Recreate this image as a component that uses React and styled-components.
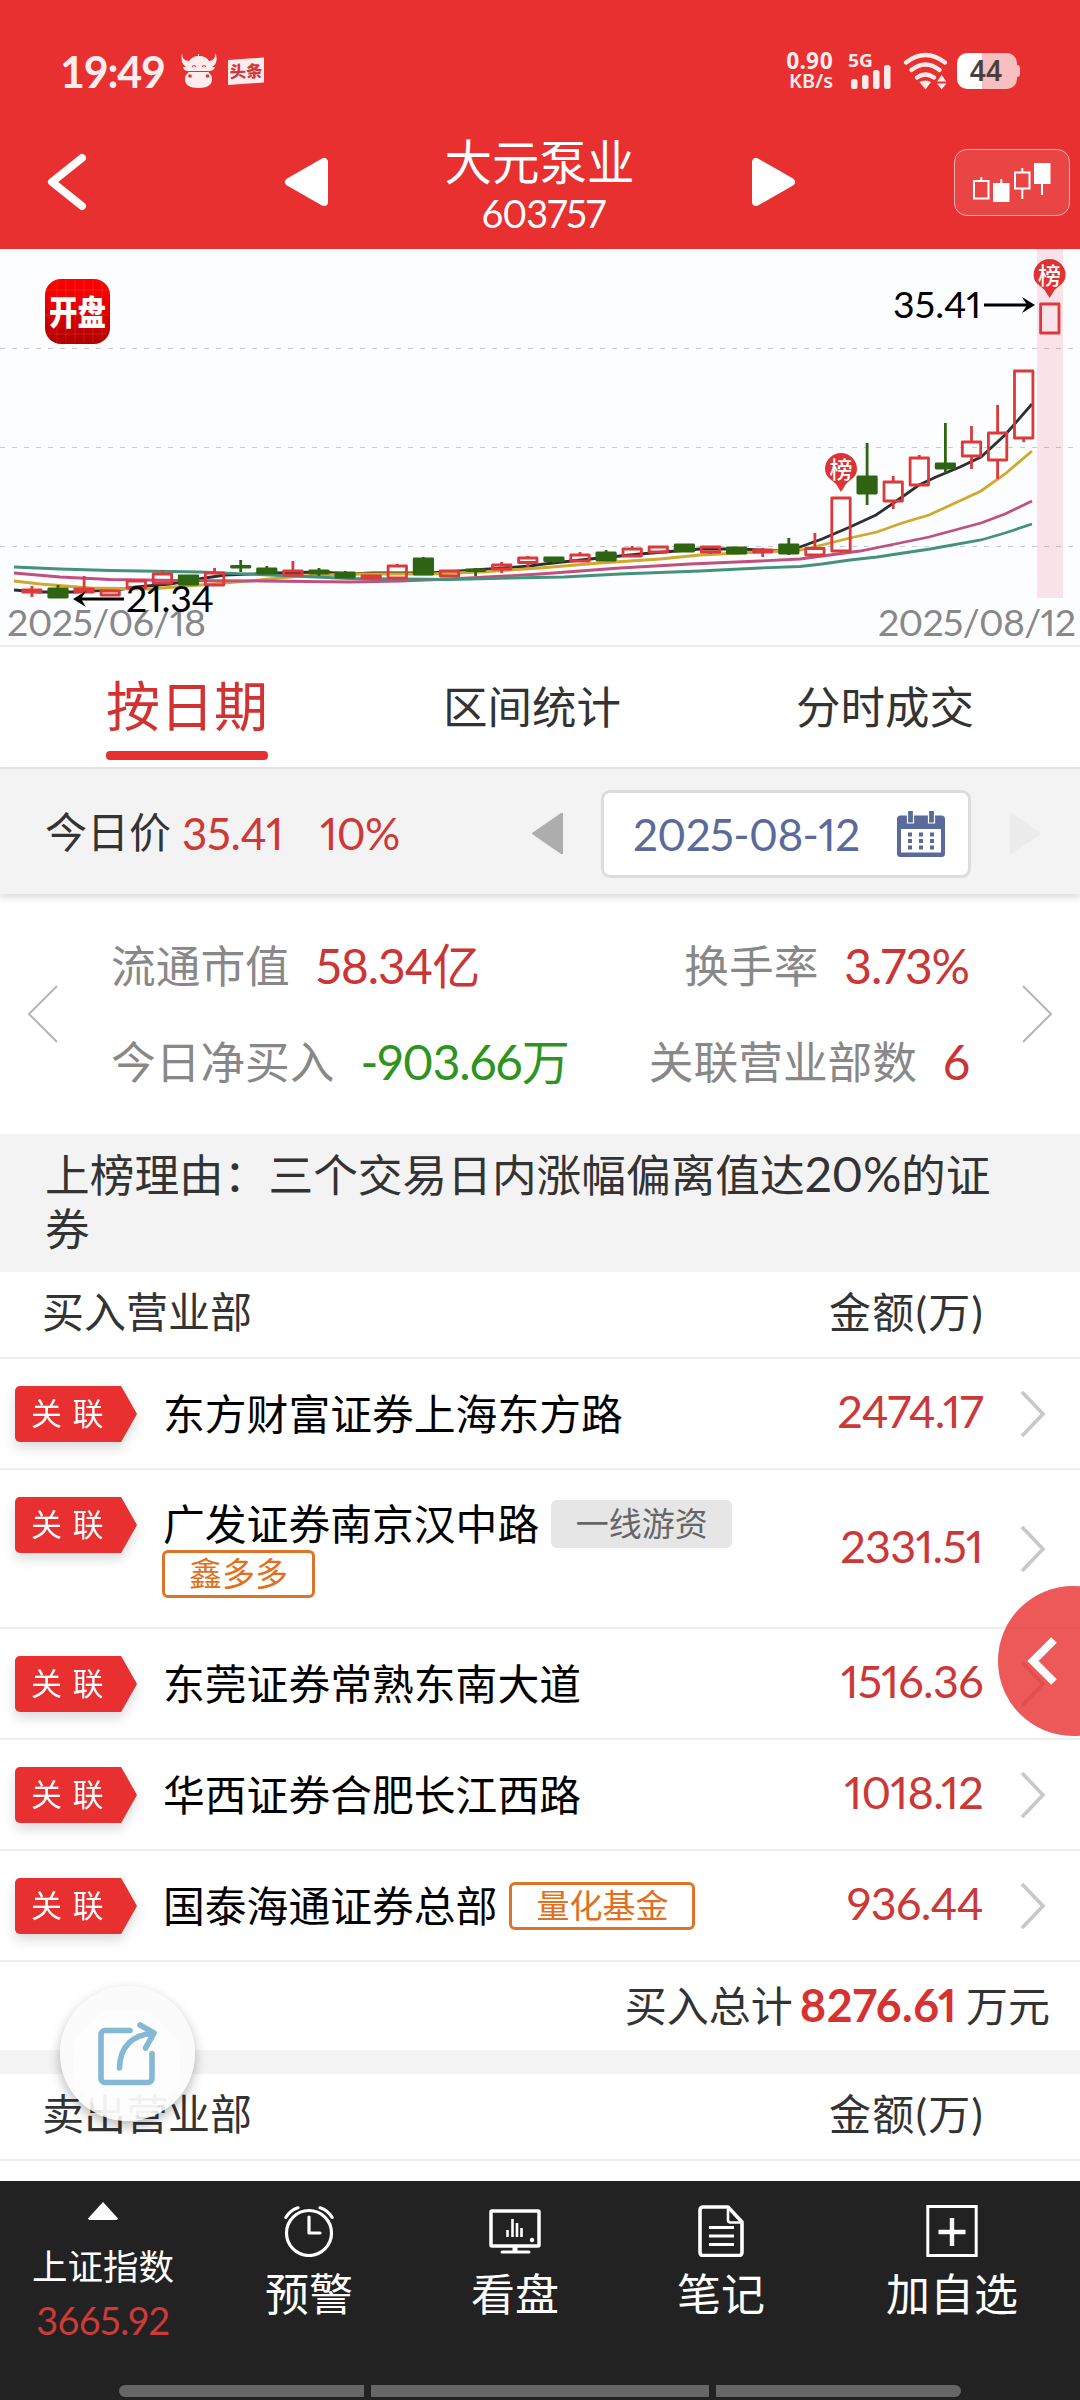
import React from 'react'
import styled, { createGlobalStyle } from 'styled-components'

const RED = '#e83030'

const candles = [
  // kind, top, bottom, high, low
  ['r', 590, 592, 586, 597],
  ['g', 588, 598, 585, 598],
  ['r', 589, 592, 576, 593],
  ['r', 591, 595, 590, 596],
  ['r', 581, 588, 580, 589],
  ['r', 574, 583, 570, 583],
  ['g', 575, 585, 575, 585],
  ['r', 573, 585, 568, 585],
  ['g', 565.5, 567.5, 560, 572],
  ['g', 568, 574, 566, 574],
  ['r', 571, 575, 561, 577],
  ['g', 570, 574, 568, 576],
  ['g', 572, 578, 571, 578],
  ['r', 576, 578, 575, 580],
  ['r', 566, 578, 564, 579],
  ['g', 558, 575, 557, 575],
  ['r', 571, 576, 570, 577],
  ['g', 569, 571.5, 568, 576],
  ['r', 565, 569, 562, 573],
  ['r', 558, 562.5, 556, 567],
  ['g', 557, 561.5, 557, 563],
  ['r', 555, 561, 552, 561],
  ['g', 552, 561, 550, 561],
  ['r', 549, 556, 546, 556],
  ['r', 547, 552, 546, 552],
  ['g', 544, 552, 544, 552],
  ['r', 547, 552, 546, 554],
  ['g', 547, 554, 547, 554],
  ['r', 550, 552, 548, 557],
  ['g', 544, 554, 538, 555],
  ['r', 548.5, 555, 533, 555],
  ['r', 498, 551, 497, 551],
  ['g', 476, 494, 443, 505],
  ['r', 482, 501, 476, 509],
  ['r', 458, 485, 455, 485],
  ['g', 463, 469, 423, 473],
  ['r', 442, 456, 426, 469],
  ['r', 433, 460, 405, 479],
  ['r', 371, 438, 370, 442],
  ['r', 304, 333, 304, 333],
]

const averages = [
  {
    color: '#2f2f33',
    points: '14,590 40,592 75,592 90,591 116,590 136,587 170,584 205,578 225,575 277,573 320,572 350,574 372,573 430,573 475,570 530,566 544,564 590,559 640,554 700,549 740,549 780,551 800,547 822,539 850,527 876,515 895,502 919,485 936,477 960,467 981,457 1005,435 1032,404',
  },
  {
    color: '#cfa92c',
    points: '14,581 40,584 90,588 150,589 200,585 260,580 300,576 350,574 430,574 480,572 540,568 600,563 660,559 700,555 760,552 800,550 822,545 850,538 877,532 902,523 929,515 953,504 981,491 1005,474 1032,451',
  },
  {
    color: '#c0507f',
    points: '14,573 60,577 110,579.5 180,580.5 260,581 350,582 400,581 450,579 540,574 620,568 690,564 760,561 800,559 860,551 900,543 929,537 981,523 1005,514 1032,501',
  },
  {
    color: '#45917a',
    points: '14,567 60,569 110,570.5 200,572 270,575 350,578.5 450,579.5 510,578 564,577 620,574 700,571 760,568 800,566.5 822,564 850,560 877,557 930,549 981,540 1005,533 1032,524',
  },
]

const buyers = [
  { name: '东方财富证券上海东方路', amount: '2474.17' },
  { name: '广发证券南京汉中路', amount: '2331.51', tags: [{ text: '一线游资' }, { text: '鑫多多', hot: true }] },
  { name: '东莞证券常熟东南大道', amount: '1516.36' },
  { name: '华西证券合肥长江西路', amount: '1018.12' },
  { name: '国泰海通证券总部', amount: '936.44', tags: [{ text: '量化基金', hot: true }] },
]

const Pin = ({ x, y }) => (
  <g>
    <path d={`M${x - 16} ${y}a16 16 0 1 1 32 0c0 8-7 11-11 15l-5 8-5-8c-4-4-11-7-11-15z`} fill="#e03232" />
    <text x={x} y={y + 8.5} fontSize="23" fontWeight="500" fill="#fff" textAnchor="middle">榜</text>
  </g>
)

const Chart = () => (
  <ChartBox>
    <svg width="1080" height="396" viewBox="0 249 1080 396">
      <defs>
        <linearGradient id="logo" x1="0" y1="0" x2="0" y2="1">
          <stop offset="0" stopColor="#ff0000" />
          <stop offset="0.25" stopColor="#f40000" />
          <stop offset="1" stopColor="#b00000" />
        </linearGradient>
      </defs>
      {[348.5, 447.5, 546.5].map((y) => (
        <line key={y} x1="0" x2="1075" y1={y} y2={y} stroke="#c9cbd2" strokeDasharray="5 7" />
      ))}
      <rect x="1037" y="249" width="26" height="349" fill="#e8304f" fillOpacity="0.13" />
      {averages.map((line) => (
        <polyline key={line.color} points={line.points} fill="none" stroke={line.color} strokeWidth="2.8" />
      ))}
      {candles.map(([kind, top, bottom, high, low], i) => {
        const x = 31.9 + i * 26.1
        const color = kind === 'r' ? '#dc3a3a' : '#2f6512'
        return (
          <g key={i} stroke={color} strokeWidth="2.8" strokeLinejoin="round">
            <line x1={x} x2={x} y1={high} y2={top} />
            <line x1={x} x2={x} y1={bottom} y2={low} />
            <rect
              x={x - 9.2}
              y={kind === 'r' ? top : top + 1}
              width="18.4"
              height={Math.max(kind === 'r' ? bottom - top : bottom - top - 2, 0.5)}
              fill={kind === 'r' ? 'none' : color}
            />
          </g>
        )
      })}
      <Pin x={1049.6} y={275} />
      <Pin x={841} y={469} />
      <rect x="45" y="279" width="65" height="65" rx="16" fill="url(#logo)" />
      <path d="M57 280v63M66 280v63M75 280v63M84 280v63M93 280v63M102 280v63M46 290h63M46 315h63M46 334h63" stroke="#fff" strokeOpacity="0.1" />
      <text x="77.5" y="324.5" fontSize="34" fontWeight="900" fill="#fff" textAnchor="middle" textLength="57" lengthAdjust="spacingAndGlyphs">开盘</text>
      <Label x="7" y="636" fill="#888" textLength="199">2025/06/18</Label>
      <Label x="878" y="636" fill="#888" textLength="198">2025/08/12</Label>
      <Label x="126" y="612" fill="#000" textLength="88">21.34</Label>
      <Label x="893" y="318" fill="#000" textLength="88">35.41</Label>
      <g fill="none" stroke="#000" strokeWidth="3">
        <path d="M124 599H77M984 305h48" />
      </g>
      <path d="M73 599l13-8-5 8 5 8z M1035 305l-13-8 5 8-5 8z" fill="#000" />
    </svg>
  </ChartBox>
)

const Clock = () => (
  <svg width="52" height="52" viewBox="0 0 52 52" fill="none" stroke="#fff" strokeLinecap="round">
    <circle cx="26" cy="28" r="22.5" strokeWidth="3.2" />
    <path d="M26 12v16h11" strokeWidth="3.2" strokeLinejoin="round" />
    <path d="M2.8 12.5Q7.5 5 15 2.8M49.2 12.5Q44.5 5 37 2.8" strokeWidth="3.2" />
  </svg>
)

const Monitor = () => (
  <svg width="52" height="52" viewBox="0 0 52 52" fill="none" stroke="#fff">
    <rect x="2" y="6" width="48" height="35" rx="1" strokeWidth="3.5" />
    <path d="M18.5 25v7M23.5 14v18M28 18v14M32.5 23v9" strokeWidth="2.6" />
    <circle cx="43" cy="35" r="2.2" fill="#fff" stroke="none" />
    <path d="M26 42v4" strokeWidth="5" />
    <path d="M13 47h27" strokeWidth="3" strokeLinecap="round" />
  </svg>
)

const Note = () => (
  <svg width="52" height="52" viewBox="0 0 52 52" fill="none" stroke="#fff" strokeLinejoin="round">
    <path d="M8 2h25l14 15v30.5a3 3 0 0 1-3 3H8a3 3 0 0 1-3-3V5a3 3 0 0 1 3-3z" strokeWidth="3.6" />
    <path d="M33 4v11a2.5 2.5 0 0 0 2.5 2.5H46" strokeWidth="2.6" />
    <path d="M14 22.5h25M14 31h25M14 39.5h25" strokeWidth="2.8" />
  </svg>
)

const AddBox = () => (
  <svg width="52" height="52" viewBox="0 0 52 52" fill="none" stroke="#fff">
    <rect x="1.8" y="1.5" width="48.4" height="49" strokeWidth="3" />
    <path d="M12.5 27h27M26 13v28" strokeWidth="4.4" />
  </svg>
)

const Chevron = () => (
  <svg width="30" height="48" viewBox="0 0 30 48" fill="none" stroke="#c8c8c8" strokeWidth="3.6">
    <path d="M4 2l21 22L4 46" />
  </svg>
)

const StatusIcons = () => (
  <>
    <Speed>
      <b>0.90</b>
      <span>KB/s</span>
    </Speed>
    <StatusSvg width="44" height="50" viewBox="850 46 44 50" fill="#ffeaea">
      <text x="850" y="67" fontSize="18" fontWeight="700" textLength="25" lengthAdjust="spacingAndGlyphs">5G</text>
      <rect x="853" y="79" width="6.5" height="10" rx="2.5" />
      <rect x="864" y="75" width="6.5" height="14" rx="2.5" />
      <rect x="875" y="70" width="6.5" height="19" rx="2.5" />
      <rect x="886" y="65" width="6.5" height="24" rx="2.5" />
    </StatusSvg>
    <Wifi width="46" height="38" viewBox="903 52 46 38" fill="none" stroke="#ffeaea" strokeWidth="4.2" strokeLinecap="round">
      <path d="M906 62.5Q925.5 47.5 945 62.5M911.5 70Q925.5 59 939.5 70M917 77.5Q925.5 71.5 934 77.5" />
      <path d="M919.5 82q6-3 11.5 0l-5.5 7.5z M937 81.5l4.7-6.5 4.7 6.5z M937 83.5h9.4l-4.7 6z" fill="#ffeaea" stroke="none" />
    </Wifi>
    <StatusSvg width="64" height="38" viewBox="957 52 64 38">
      <path d="M982.5 53H1007a10 10 0 0 1 10 10v2a3 3 0 0 1 3 3v6a3 3 0 0 1-3 3v2a10 10 0 0 1-10 10h-24.5z" fill="#f7bfbf" />
      <path d="M982.5 53H967a10 10 0 0 0-10 10v16a10 10 0 0 0 10 10h15.5z" fill="#fff" />
      <text x="986" y="81" fontSize="28" fontWeight="600" fill="#4a3f3f" textAnchor="middle">44</text>
    </StatusSvg>
  </>
)

const App = () => {
  return (
    <Page>
      <Global />
      <Header>
        <Status>
          <Time>19:49</Time>
          <svg width="36" height="36" viewBox="0 0 36 36" fill="#ffecec">
            <path d="M1 0Q1 8 8 8Q12 3 17 3V1h1v2q7 0 10 5Q34 8 34.5 0Q38 10 31 14h3q-1 4-6 4v2q3 2 3 6 0 9-13.5 9T4 26q0-4 3-6v-2q-4 0-5-4h3Q-1 10 1 0z" />
            <path d="M11 13.5q2-1.5 4 0M21 13.5q2-1.5 4 0M6 19q1-.5 2-.5h19q1 0 2 .5" fill="none" stroke={RED} strokeWidth="1.2" />
            <circle cx="9" cy="23" r="1.8" fill={RED} />
            <circle cx="26.5" cy="23" r="1.8" fill={RED} />
          </svg>
          <svg width="36" height="30" viewBox="0 0 36 30">
            <path d="M0 4l36-2.5v25L0 29z" fill="#ffecec" />
            <text x="18" y="21.5" fontSize="16.5" fontWeight="900" fill="#d03a3a" textAnchor="middle" transform="rotate(-2 18 15)">头条</text>
          </svg>
          <Spacer />
          <StatusIcons />
        </Status>
        <TitleBar>
          <svg width="42" height="60" viewBox="0 0 42 60" fill="none" stroke="#fff" strokeWidth="8" strokeLinecap="round" strokeLinejoin="round">
            <path d="M36 6L6 30l30 24" />
          </svg>
          <Switcher>
            <svg width="45" height="50" viewBox="0 0 45 50" fill="#fff" stroke="#fff" strokeWidth="8" strokeLinejoin="round">
              <path d="M40 5v40L5 25z" />
            </svg>
            <Stock>
              <h1>大元泵业</h1>
              <p>603757</p>
            </Stock>
            <svg width="45" height="50" viewBox="0 0 45 50" fill="#fff" stroke="#fff" strokeWidth="8" strokeLinejoin="round">
              <path d="M5 5v40l35-20z" />
            </svg>
          </Switcher>
          <KButton>
            <svg width="80" height="42" viewBox="973 160 80 42" stroke="#fff" strokeWidth="2" fill="none">
              <path d="M975 180h14.5v17.5H975zM982.3 176v4M1002.3 178v5M1016 171.5h14.5v16H1016zM1023.3 167v4M1023.3 188v10M1043 182v12" />
              <path d="M995 183h14.5v17H995zM1036 163h14.5v19H1036z" fill="#fff" />
            </svg>
          </KButton>
        </TitleBar>
      </Header>
      <Chart />
      <Tabs>
        <Tab $active>按日期</Tab>
        <Tab>区间统计</Tab>
        <Tab>分时成交</Tab>
      </Tabs>
      <PriceBar>
        <span>今日价</span>
        <Price>35.41</Price>
        <Rate>10%</Rate>
        <Spacer />
        <svg width="31" height="41" viewBox="0 0 31 41" fill="#adadad">
          <path d="M31 0v41h-2L0 21v-1L29 0z" />
        </svg>
        <DateBox>
          2025-08-12
          <svg width="48" height="46" viewBox="0 0 48 46">
            <rect x="0" y="4.5" width="48" height="41.5" rx="3.5" fill="#5a6a9c" />
            <rect x="4" y="18" width="40" height="23.500" fill="#fff" />
            <path d="M10.500 0v12h6V0M31.500 0v12h6V0" fill="#5a6a9c" stroke="#fff" strokeWidth="1.200" />
            <path d="M11 23.500h28M11 30h28M11 36.500h28" stroke="#5a6a9c" strokeWidth="4" strokeDasharray="4 7" />
          </svg>
        </DateBox>
        <svg width="31" height="41" viewBox="0 0 31 41" fill="#ececec">
          <path d="M0 0v41h2l29-20v-1L2 0z" />
        </svg>
      </PriceBar>
      <Summary>
        <svg width="30" height="58" viewBox="0 0 30 58" fill="none" stroke="#b5b5b5" strokeWidth="2">
          <path d="M29 1L1 29l28 28" />
        </svg>
        <Facts>
          <Fact>流通市值<Value>58.34亿</Value></Fact>
          <Fact>换手率<Value>3.73%</Value></Fact>
          <Fact>今日净买入<Value $down>-903.66万</Value></Fact>
          <Fact>关联营业部数<Value>6</Value></Fact>
        </Facts>
        <svg width="30" height="58" viewBox="0 0 30 58" fill="none" stroke="#b5b5b5" strokeWidth="2">
          <path d="M1 1l28 28L1 57" />
        </svg>
      </Summary>
      <Reason>上榜理由：三个交易日内涨幅偏离值达<i>20%</i>的证券</Reason>
      <ListHead>
        <span>买入营业部</span>
        <HeadAmount>金额(万)</HeadAmount>
      </ListHead>
      {buyers.map((item) => (
        <Row key={item.name}>
          <Flag><span>关联</span></Flag>
          <Name>
            {item.name}
            {item.tags && item.tags.map((tag) => (
              <Tag key={tag.text} $hot={tag.hot}>{tag.text}</Tag>
            ))}
          </Name>
          <Amount>{item.amount}</Amount>
          <Chevron />
        </Row>
      ))}
      <Total>买入总计<b>8276.61</b>万元</Total>
      <Gap />
      <ListHead>
        <span>卖出营业部</span>
        <HeadAmount>金额(万)</HeadAmount>
      </ListHead>
      <Spacer />
      <Nav>
        <NavIndex>
          <svg width="30" height="18" viewBox="0 0 30 18" fill="#fff">
            <path d="M15 0l15 16.5-1 1.5H1l-1-1.5z" />
          </svg>
          <span>上证指数</span>
          <em>3665.92</em>
        </NavIndex>
        <NavItem><Clock />预警</NavItem>
        <NavItem><Monitor />看盘</NavItem>
        <NavItem><Note />笔记</NavItem>
        <NavItem $wide><AddBox />加自选</NavItem>
        <Gesture>
          <i /><i /><i />
        </Gesture>
      </Nav>
      <SideButton>
        <svg width="32" height="48" viewBox="0 0 32 48" fill="none" stroke="#fff" strokeWidth="8">
          <path d="M28 3L7 24l21 21" />
        </svg>
      </SideButton>
      <ShareButton>
        <svg width="62" height="66" viewBox="97 2021 62 66" fill="none" stroke="#84b8d5" strokeWidth="5.6" strokeLinecap="round" strokeLinejoin="round">
          <path d="M130 2030.5h-25a4 4 0 0 0-4 4v44a4 4 0 0 0 4 4h43a4 4 0 0 0 4-4v-25" />
          <path d="M119.5 2068C120 2045 134 2035 153 2033M140 2025l14 8-8.5 15" />
        </svg>
      </ShareButton>
    </Page>
  );
}

const Global = createGlobalStyle`
  * {
    box-sizing: border-box;
  }
  body {
    margin: 0;
    background: #fff;
  }
  svg {
    display: block;
    flex: none;
  }
`;

const Page = styled.div`
  position: relative;
  display: flex;
  flex-direction: column;
  width: 1080px;
  height: 2400px;
  overflow: hidden;
  background: #fff;
  color: #333;
  font-family: Lato, "Noto Sans CJK SC", sans-serif;
  font-size: 42px;
  font-variant-numeric: proportional-nums;
  line-height: 1;
  white-space: nowrap;
`;

const Spacer = styled.div`
  flex: 1;
`;

const Header = styled.header`
  height: 249px;
  background: ${RED};
  color: #fff;
`;

const Status = styled.div`
  display: flex;
  align-items: center;
  height: 115px;
  padding: 27px 59px 0 60px;
  > svg + svg {
    margin-left: 11px;
  }
`;

const Time = styled.div`
  width: 121px;
  font-size: 43px;
  font-weight: 700;
  letter-spacing: -1.2px;
  font-variant-numeric: tabular-nums;
  color: #ffecec;
`;

const StatusSvg = styled.svg`
  font-family: "Noto Sans", sans-serif;
`;

const Speed = styled.div`
  display: flex;
  flex-direction: column;
  align-items: flex-end;
  margin-right: 15px;
  color: #ffecec;
  font-family: "Noto Sans", sans-serif;
  font-size: 20px;
  font-weight: 600;
  line-height: 20px;
  b {
    font-size: 22.5px;
    font-weight: 700;
    line-height: 20px;
  }
`;

const Wifi = styled.svg`
  margin-right: -3px;
`;

const TitleBar = styled.div`
  display: flex;
  align-items: center;
  justify-content: space-between;
  height: 134px;
  padding: 0 10px 0 46px;
`;

const Switcher = styled.div`
  display: flex;
  align-items: center;
  justify-content: space-between;
  width: 512px;
  margin-left: 37px;
`;

const Stock = styled.div`
  padding-top: 8px;
  text-align: center;
  h1 {
    margin: 0;
    font-size: 47.5px;
    font-weight: 400;
    line-height: 56px;
  }
  p {
    margin: 0 0 6px;
    padding: 3px 0 0 8px;
    font-size: 38px;
    line-height: 40px;
    letter-spacing: -1px;
  }
`;

const KButton = styled.button`
  display: flex;
  align-items: center;
  justify-content: center;
  width: 116px;
  height: 67px;
  padding: 0;
  border: 1.5px solid #f6b0b0;
  border-radius: 13px;
  background: rgba(255, 255, 255, 0.1);
`;

const ChartBox = styled.div`
  height: 396px;
  background: #fcfdff;
`;

const Label = styled.text`
  font-size: 37.5px;
`;

const Tabs = styled.div`
  display: flex;
  justify-content: space-between;
  height: 124px;
  padding: 0 106px;
  border-top: 2px solid #ececee;
  border-bottom: 2px solid #e8e8e8;
`;

const Tab = styled.div`
  height: 112px;
  font-size: ${(p) => (p.$active ? '54px' : '44.5px')};
  line-height: 119px;
  color: ${(p) => (p.$active ? '#d23232' : '#333')};
  &::after {
    content: '';
    display: ${(p) => (p.$active ? 'block' : 'none')};
    height: 9px;
    margin-top: -15px;
    border-radius: 4px;
    background: ${RED};
  }
`;

const PriceBar = styled.div`
  position: relative;
  display: flex;
  align-items: center;
  height: 125px;
  padding: 4px 39px 0 45px;
  background: #f3f3f3;
  box-shadow: 0 3px 8px rgba(0, 0, 0, 0.16);
  > span {
    margin-top: -3px;
  }
`;

const Price = styled.div`
  width: 138px;
  margin: -2px 0 0 11px;
  color: #d03838;
  font-size: 44px;
  letter-spacing: -0.4px;
`;

const Rate = styled.div`
  margin-top: -2px;
  color: #d03838;
  font-size: 44px;
  letter-spacing: -0.7px;
`;

const DateBox = styled.div`
  display: flex;
  align-items: center;
  justify-content: space-between;
  width: 370px;
  height: 88px;
  margin: 0 39px 0 38px;
  padding: 0 23px 0 29px;
  border: 3px solid #dcdcdc;
  border-radius: 9px;
  background: #fff;
  color: #5a6a9c;
  font-size: 44px;
  letter-spacing: -0.6px;
`;

const Summary = styled.div`
  display: flex;
  align-items: center;
  height: 240px;
  padding: 0 28px;
`;

const Facts = styled.div`
  flex: 1;
  display: grid;
  grid-template-columns: auto auto;
  justify-content: space-between;
  row-gap: 40px;
  padding: 0 53px 0 53px;
`;

const Fact = styled.div`
  display: flex;
  align-items: center;
  height: 56px;
  color: #888;
  font-size: 44.7px;
  &:nth-child(even) {
    justify-content: flex-end;
  }
`;

const Value = styled.span`
  margin-left: 26px;
  color: ${(p) => (p.$down ? '#2e9420' : '#cc3535')};
  font-size: 48px;
  letter-spacing: -1.1px;
`;

const Reason = styled.div`
  height: 138px;
  padding: 14px 60px 0 45px;
  background: #f3f3f3;
  font-size: 44.7px;
  line-height: 54px;
  white-space: normal;
  i {
    font-style: normal;
    font-size: 48px;
    line-height: 50px;
    letter-spacing: -0.3px;
  }
`;

const ListHead = styled.div`
  flex: none;
  display: flex;
  justify-content: space-between;
  height: 87px;
  padding: 0 96px 0 42px;
  border-bottom: 2px solid #ededed;
  line-height: 80px;
`;

const HeadAmount = styled.span`
  letter-spacing: 1.3px;
`;

const Row = styled.div`
  display: flex;
  align-items: center;
  min-height: 111px;
  padding: 29px 32px 29px 15px;
  border-bottom: 2px solid #eee;
`;

const Flag = styled.div`
  align-self: flex-start;
  width: 122px;
  height: 56px;
  margin-top: -2px;
  margin-bottom: -6px;
  filter: drop-shadow(0 6px 6px rgba(0, 0, 0, 0.14));
  span {
    display: block;
    height: 56px;
    padding-left: 16px;
    border-radius: 5px 0 0 5px;
    background: ${RED};
    clip-path: polygon(0 0, 87% 0, 100% 50%, 87% 100%, 0 100%);
    color: #fff;
    font-size: 31px;
    line-height: 55px;
    letter-spacing: 10.5px;
  }
`;

const Name = styled.div`
  flex: 1;
  margin: 0 90px -1px 26px;
  color: #000;
  font-size: 41.8px;
  line-height: 50px;
  white-space: normal;
`;

const Tag = styled.span`
  display: inline-block;
  height: 48px;
  margin-left: ${(p) => (p.$hot ? '-1px' : '12px')};
  padding: 0 ${(p) => (p.$hot ? '24px' : '24.5px')};
  border: ${(p) => (p.$hot ? '3px solid #dd7427' : 'none')};
  border-radius: 6px;
  background: ${(p) => (p.$hot ? '#fff' : '#e6e6e6')};
  color: ${(p) => (p.$hot ? '#e07020' : '#666')};
  font-size: 33px;
  line-height: ${(p) => (p.$hot ? '41px' : '47px')};
  vertical-align: top;
  margin-top: 1px;
  margin-bottom: 1px;
  &:first-child {
    margin-left: 12px;
  }
`;

const Amount = styled.div`
  margin-right: 35px;
  margin-top: -5px;
  color: #cc3838;
  font-size: 45px;
  line-height: 46px;
  letter-spacing: -0.7px;
`;

const Total = styled.div`
  display: flex;
  align-items: center;
  justify-content: flex-end;
  height: 88px;
  padding: 0 30px 0 0;
  b {
    margin: -2px 9px 0 7px;
    color: #d63232;
    font-size: 45px;
    font-weight: 700;
    letter-spacing: 0.4px;
  }
`;

const Gap = styled.div`
  height: 24px;
  background: #f3f3f3;
`;

const Nav = styled.nav`
  position: relative;
  display: flex;
  height: 219px;
  background: #222;
  color: #fff;
`;

const NavIndex = styled.div`
  display: flex;
  flex-direction: column;
  align-items: center;
  width: 206px;
  padding-top: 21px;
  font-size: 35.5px;
  span {
    margin-top: 29px;
  }
  em {
    margin-top: 16px;
    color: #cc3a3a;
    font-size: 38px;
    font-style: normal;
    letter-spacing: -0.4px;
  }
`;

const NavItem = styled.div`
  display: flex;
  flex-direction: column;
  align-items: center;
  width: ${(p) => (p.$wide ? '256px' : '206px')};
  padding-top: 24px;
  gap: 15px;
  font-size: 44px;
`;

const Gesture = styled.div`
  position: absolute;
  left: 119px;
  bottom: 3px;
  display: flex;
  gap: 7px;
  width: 842px;
  height: 12px;
  border-radius: 6px;
  overflow: hidden;
  i {
    flex: 245;
    background: #666;
  }
  i:nth-child(2) {
    flex: 338;
  }
`;

const SideButton = styled.div`
  position: absolute;
  left: 998px;
  top: 1586px;
  display: flex;
  align-items: center;
  width: 150px;
  height: 150px;
  padding-left: 28px;
  border-radius: 50%;
  background: rgba(232, 48, 48, 0.8);
`;

const ShareButton = styled.div`
  position: absolute;
  left: 60px;
  top: 1986px;
  display: flex;
  align-items: center;
  justify-content: center;
  width: 135px;
  height: 135px;
  border-radius: 50%;
  background: rgba(251, 251, 251, 0.88);
  box-shadow: 0 5px 12px rgba(0, 0, 0, 0.28);
  &::before {
    content: '';
    position: absolute;
    inset: 24px 15px 6px 13px;
    background: rgba(255, 255, 255, 0.5);
    clip-path: polygon(30% 0, 70% 0, 100% 30%, 100% 72%, 70% 100%, 30% 100%, 0 72%, 0 30%);
  }
  svg {
    position: relative;
  }
`;

export default App
